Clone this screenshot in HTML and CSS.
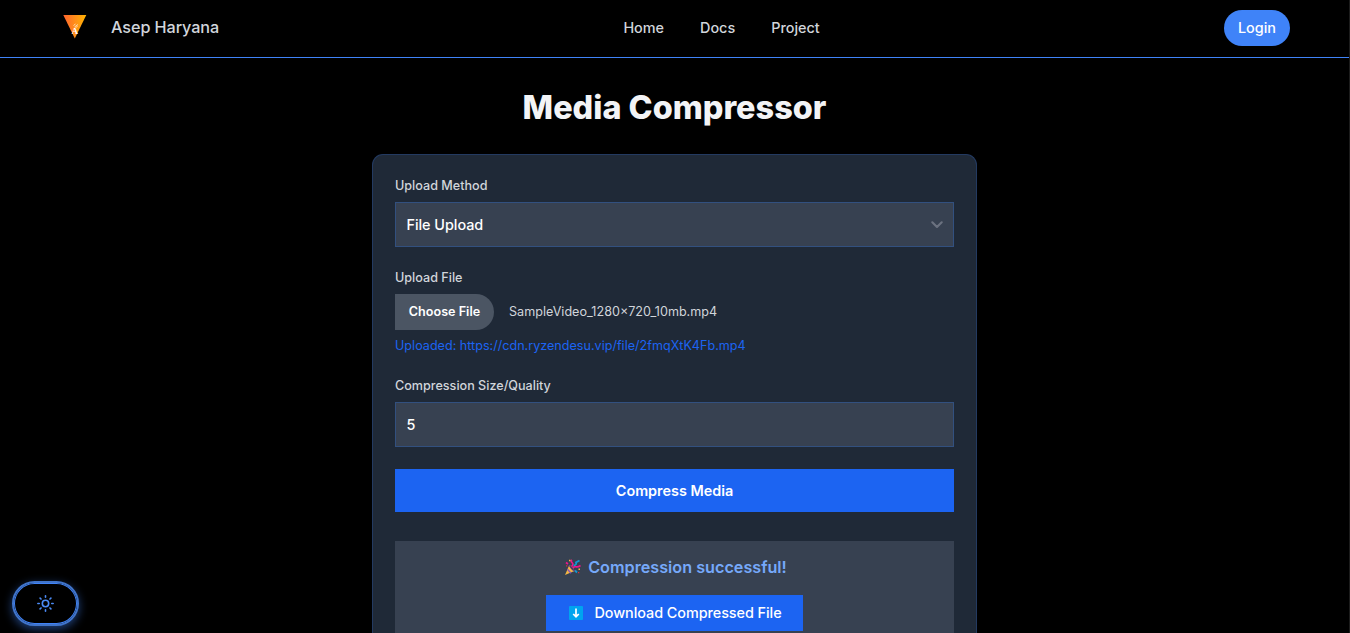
FILE: index.html
```html
<!DOCTYPE html>
<html lang="en">
<head>
<meta charset="utf-8">
<title>Media Compressor</title>
<link rel="stylesheet" href="styles.css">
</head>
<body>
<header class="navbar">
  <a class="brand">
    <svg class="logo" viewBox="0 0 24 24">
      <defs><linearGradient id="flame" x1="0" x2="1"><stop offset="0" stop-color="#ff642d"/><stop offset=".65" stop-color="#ff9a13"/><stop offset="1" stop-color="#ffb400"/></linearGradient></defs>
      <path d="M.3 0H23.300L11.800 23.500Z" fill="url(#flame)"/>
      <path d="M10.500 10.500l2-1.500m-1 3l3.500-2.500m-2.500 3l2-1" stroke="#ffd9ad" stroke-width="1" fill="none"/>
      <text x="11.800" y="19" text-anchor="middle" class="logo-letter">A</text>
    </svg>
    <span class="brand-name">Asep Haryana</span>
  </a>
  <nav class="links"><a>Home</a><a>Docs</a><a>Project</a></nav>
  <button class="login">Login</button>
</header>
<main class="page">
  <h1 class="title">Media Compressor</h1>
  <section class="card">
    <div class="label">Upload Method</div>
    <div class="field select"><span>File Upload</span>
      <svg class="chevron" viewBox="0 0 12 8"><path d="M1.300 1.300L6 6L10.700 1.300" fill="none" stroke="#6b7280" stroke-width="2.100" stroke-linecap="round" stroke-linejoin="round"/></svg>
    </div>
    <div class="label">Upload File</div>
    <div class="file-row"><button class="choose">Choose File</button><span class="filename">SampleVideo_1280×720_10mb.mp4</span></div>
    <div class="uploaded">Uploaded: https://cdn.ryzendesu.vip/file/2fmqXtK4Fb.mp4</div>
    <div class="label">Compression Size/Quality</div>
    <div class="field">5</div>
    <button class="submit">Compress Media</button>
    <div class="result">
      <div class="success">
        <svg class="party" viewBox="0 0 17 17">
          <path d="M1 16L5.200 6.200Q9.500 7.500 10.500 12Z" fill="#f5b642"/>
          <path d="M3.500 10.200L7 14.200M5.200 6.500L10 12" stroke="#8753b8" stroke-width="1.300"/>
          <path d="M5.200 6.200Q9 6.800 10.500 12Q6.500 11 5.200 6.200" fill="#513a5f"/>
          <path d="M7.500 7.500Q10 5.500 8 3.500Q6.500 2 8 1M2 3.500l2 1.500" fill="none" stroke="#ed168c" stroke-width="1.700"/>
          <path d="M9 9Q10 7 12 7.700Q13.500 8.500 16.500 6.500" fill="none" stroke="#ed168c" stroke-width="1.700"/>
          <path d="M9.500 6.500Q13 6 12 3.500L15.500 1.500M11 11.500l2 2" fill="none" stroke="#1596d1" stroke-width="1.800"/>
          <path d="M5 .7h1.500v1.500H5zM14.500 9.500H16V11h-1.500z" fill="#f5b642"/>
          <path d="M2 6.200h1.300v1.300H2zM14 13h1.300v1.300H14z" fill="#d13438"/>
        </svg>
        <span>Compression successful!</span>
      </div>
      <a class="download">
        <svg class="down" viewBox="0 0 14 14"><rect width="14" height="14" rx="1" fill="#00a4ef"/><path d="M7 2.500v8M4.200 8L7 10.700L9.800 8" fill="none" stroke="#fff" stroke-width="1.700"/></svg>
        <span>Download Compressed File</span>
      </a>
    </div>
  </section>
</main>
<button class="theme" aria-label="Toggle theme">
  <svg class="sun" viewBox="0 0 16 16" fill="none" stroke="#4b8bf5" stroke-width="1.500" stroke-linecap="round"><circle cx="8" cy="8" r="3"/><path d="M8 .8v1.300M8 13.900v1.300M.8 8h1.300M13.900 8h1.300M2.900 2.900l.9.9M12.200 12.200l.9.9M2.900 13.100l.9-.9M12.200 3.800l.9-.9"/></svg>
</button>
</body>
</html>
```
FILE: styles.css
```css
* { box-sizing: border-box; }
body { margin: 0; height: 633px; overflow: hidden; background: #000; color: #f3f4f6; font: 14.4px/21.6px Inter, sans-serif; border-right: 1px solid #1c1c1c; }
button { border: 0; font: inherit; padding: 0; }
.navbar { display: flex; justify-content: space-between; align-items: center; height: 58px; padding: 0 59px 2px 63px; border-bottom: 1px solid #3f83f8; color: #d1d5db; font-weight: 500; }
.brand { display: flex; align-items: center; gap: 24px; }
.logo { width: 24px; height: 24px; margin-bottom: 1px; }
.logo-letter { font: bold 9px "Liberation Serif", serif; fill: #fff; }
.brand-name { font-size: 16.2px; letter-spacing: -.08px; }
.links { display: flex; gap: 36px; }
.login { width: 66px; height: 36px; border-radius: 18px; background: #3f83f8; color: #fff; font-weight: 500; }
.page { display: flex; flex-direction: column; align-items: center; height: 575px; overflow: hidden; padding-top: 32px; }
.title { flex: none; margin: 0 0 28px; font-size: 32.4px; line-height: 36px; font-weight: 800; }
.card { flex: 1; width: 605px; padding: 22px 22px 0; background: #1f2937; border: 1px solid #233a61; border-bottom: 0; border-radius: 11px 11px 0 0; }
.label { font-size: 12.6px; line-height: 18px; font-weight: 500; color: #d1d5db; margin-bottom: 7px; }
.field { display: flex; align-items: center; justify-content: space-between; height: 45px; margin-bottom: 22px; padding: 0 10px 0 10.500px; border: 1px solid #32507f; background: #374151; color: #fff; font-weight: 500; letter-spacing: -.04px; }
.chevron { width: 12px; height: 8px; }
.file-row { display: flex; align-items: center; gap: 15px; height: 36px; font-size: 12.6px; color: #d1d5db; }
.choose { width: 99px; height: 36px; border-radius: 0 18px 18px 0; background: #4b5563; color: #fff; font-weight: 600; }
.uploaded { margin: 7px 0 23px; line-height: 17px; font-size: 12.6px; color: #1c64f2; }
.submit { display: block; width: 100%; height: 43px; background: #1c64f2; color: #fff; font-weight: 600; }
.result { display: flex; flex-direction: column; align-items: center; height: 92px; margin-top: 29px; padding-top: 14px; background: #374151; }
.success { display: flex; align-items: center; gap: 7px; height: 25px; margin-bottom: 15px; padding-left: 2px; font-size: 16.2px; font-weight: 600; color: #76a9fa; }
.party { width: 17px; height: 17px; }
.download { display: flex; align-items: center; justify-content: center; gap: 11px; width: 257px; height: 36px; padding-left: 2px; background: #1c64f2; color: #fff; font-weight: 500; letter-spacing: -.05px; }
.down { width: 14px; height: 14px; }
.theme { position: fixed; left: 12px; bottom: 7px; display: flex; align-items: center; justify-content: center; width: 67px; height: 45px; border: 2px solid #4074ca; border-radius: 23px; background: #000; box-shadow: inset 0 0 0 1px #3f83f8, 0 3px 10px rgba(63,131,248,.5); }
.sun { width: 17px; height: 17px; }
```
